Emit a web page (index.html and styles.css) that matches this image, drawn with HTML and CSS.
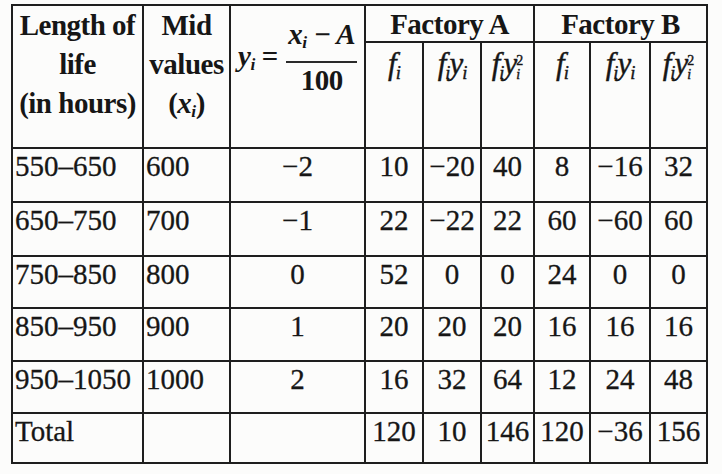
FILE: index.html
```html
<!DOCTYPE html>
<html lang="en">
<head>
    <meta charset="UTF-8">
    <title>Length of life table</title>
    <link rel="stylesheet" href="styles.css">
</head>
<body>
    <table class="life-table">
        <colgroup>
            <col class="c-range">
            <col class="c-mid">
            <col class="c-y">
            <col class="c-fa1"><col class="c-fa2"><col class="c-fa3">
            <col class="c-fb1"><col class="c-fb2"><col class="c-fb3">
        </colgroup>
        <thead>
            <tr class="head-top">
                <th rowspan="2" class="stack">Length of<br>life<br>(in hours)</th>
                <th rowspan="2" class="stack">Mid<br>values<br>(<i>x<sub>i</sub></i>)</th>
                <th rowspan="2" class="formula">
                    <span class="fx"><i>y<sub>i</sub></i> =</span>
                    <span class="frac">
                        <span class="num"><i>x<sub>i</sub></i> &minus; <i>A</i></span>
                        <span class="den">100</span>
                    </span>
                </th>
                <th colspan="3" class="factory">Factory A</th>
                <th colspan="3" class="factory">Factory B</th>
            </tr>
            <tr class="head-sub">
                <th><i>f<sub>i</sub></i></th>
                <th><i>f<sub>i</sub>y<sub>i</sub></i></th>
                <th><i>f<sub>i</sub>y</i><span class="supsub"><span class="up">2</span><span class="down"><i>i</i></span></span></th>
                <th><i>f<sub>i</sub></i></th>
                <th><i>f<sub>i</sub>y<sub>i</sub></i></th>
                <th><i>f<sub>i</sub>y</i><span class="supsub"><span class="up">2</span><span class="down"><i>i</i></span></span></th>
            </tr>
        </thead>
        <tbody>
            <tr class="r1">
                <td class="left">550&ndash;650</td><td class="left">600</td><td>&minus;2</td>
                <td>10</td><td>&minus;20</td><td>40</td><td>8</td><td>&minus;16</td><td>32</td>
            </tr>
            <tr class="r2">
                <td class="left">650&ndash;750</td><td class="left">700</td><td>&minus;1</td>
                <td>22</td><td>&minus;22</td><td>22</td><td>60</td><td>&minus;60</td><td>60</td>
            </tr>
            <tr class="r3">
                <td class="left">750&ndash;850</td><td class="left">800</td><td>0</td>
                <td>52</td><td>0</td><td>0</td><td>24</td><td>0</td><td>0</td>
            </tr>
            <tr class="r4">
                <td class="left">850&ndash;950</td><td class="left">900</td><td>1</td>
                <td>20</td><td>20</td><td>20</td><td>16</td><td>16</td><td>16</td>
            </tr>
            <tr class="r5">
                <td class="left">950&ndash;1050</td><td class="left">1000</td><td>2</td>
                <td>16</td><td>32</td><td>64</td><td>12</td><td>24</td><td>48</td>
            </tr>
            <tr class="r6">
                <td class="left">Total</td><td></td><td></td>
                <td>120</td><td>10</td><td>146</td><td>120</td><td>&minus;36</td><td>156</td>
            </tr>
        </tbody>
    </table>
</body>
</html>
```

FILE: styles.css
```css
body {
    margin: 0;
    padding: 4px 0 0 11px;
    background: #fcfcfb;
    color: #161616;
    font-family: "Liberation Serif", "DejaVu Serif", serif;
}

.life-table {
    border-collapse: collapse;
    table-layout: fixed;
    width: 697px;
}

.c-range { width: 131px; }
.c-mid { width: 87px; }
.c-y { width: 135px; }
.c-fa1 { width: 58px; }
.c-fa2 { width: 58px; }
.c-fa3 { width: 53px; }
.c-fb1 { width: 56px; }
.c-fb2 { width: 60px; }
.c-fb3 { width: 57px; }

.life-table th,
.life-table td {
    border: 2px solid #1e1e1e;
    padding: 0;
    text-align: center;
    overflow: visible;
    white-space: nowrap;
}

.life-table th {
    font-weight: bold;
    font-size: 29px;
    letter-spacing: -0.5px;
}

.head-top { height: 37px; }
.head-sub { height: 106px; }

.life-table .stack {
    vertical-align: top;
    line-height: 39px;
    padding-top: 0;
}

.life-table .formula {
    vertical-align: top;
    font-style: italic;
    padding-top: 11px;
    font-size: 29px;
}

.formula .fx,
.formula .frac {
    display: inline-block;
    vertical-align: middle;
}

.formula .fx {
    margin-right: 2px;
}

.frac .num,
.frac .den {
    display: block;
    line-height: 34px;
}

.frac .num {
    border-bottom: 2px solid #2a2a2a;
    padding: 0 2px 2px;
}

.frac .den {
    font-style: normal;
    padding-top: 0;
}

.life-table .factory {
    vertical-align: middle;
    line-height: 30px;
}

.life-table .head-sub th {
    vertical-align: top;
    font-weight: normal;
    font-size: 31px;
    padding-top: 3px;
    letter-spacing: -1px;
    -webkit-text-stroke: 0.4px #161616;
}

sub {
    font-size: 0.6em;
    vertical-align: -0.25em;
}

.supsub {
    display: inline-flex;
    flex-direction: column;
    align-items: flex-start;
    font-size: 14px;
    line-height: 14px;
    vertical-align: 9px;
    letter-spacing: 0;
}

.supsub .up {
    font-style: normal;
}

.life-table td {
    font-size: 29px;
    vertical-align: top;
    padding-top: 1px;
    -webkit-text-stroke: 0.3px #161616;
}

.life-table td.left {
    text-align: left;
    padding-left: 2px;
}

.r1 { height: 54px; }
.r2 { height: 54px; }
.r3 { height: 52px; }
.r4 { height: 53px; }
.r5 { height: 52px; }
.r6 { height: 50px; }
```
